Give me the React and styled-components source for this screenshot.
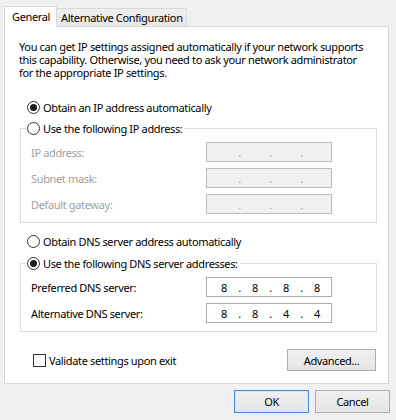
import React from "react";
import styled, { createGlobalStyle } from "styled-components";

const FONT = `"Noto Sans", "Open Sans", sans-serif`;

const Global = createGlobalStyle`
  html, body { margin: 0; padding: 0; background: #f0f0f0; }
  body { font-family: ${FONT}; font-size: 11px; letter-spacing: -0.35px; color: #000; }
  * { box-sizing: border-box; }
`;

const Window = styled.div`
  width: 396px;
  height: 420px;
  background: #f0f0f0;
  padding: 6px 0 0 4px;
  display: flex;
  flex-direction: column;
  overflow: hidden;
`;

const TabStrip = styled.div`
  display: flex;
  align-items: flex-end;
  height: 20px;
`;

const Tab = styled.div`
  position: relative;
  z-index: 1;
  height: ${(p) => (p.$active ? "21px" : "18px")};
  margin-bottom: ${(p) => (p.$active ? "-1px" : "0")};
  width: ${(p) => p.$width}px;
  padding: ${(p) => (p.$active ? "2px 0 0 7px" : "1px 0 0 4px")};
  background: ${(p) => (p.$active ? "#fff" : "linear-gradient(#f0f0f0, #e8e8e8)")};
  border: 1px solid #d9d9d9;
  border-bottom: none;
  border-left: ${(p) => (p.$active ? "1px solid #d9d9d9" : "none")};
  line-height: 15px;
  white-space: nowrap;
`;

const Panel = styled.div`
  width: 385px;
  background: #fff;
  border: 1px solid #d9d9d9;
  padding: 13px 11px 12px 15px;
  display: flex;
  flex-direction: column;
`;

const Description = styled.p`
  margin: 0 0 0 -1px;
  line-height: 13px;
  white-space: nowrap;
`;

const RadioRow = styled.label`
  display: flex;
  align-items: center;
  gap: 3px;
  height: 16px;
  margin-top: ${(p) => p.$mt || 0}px;
  padding-left: ${(p) => (p.$legend ? 0 : 7)}px;
  white-space: nowrap;
`;

const RadioCircle = styled.span`
  width: 13px;
  height: 13px;
  border-radius: 50%;
  border: 1px solid #333;
  background: #fff;
  display: flex;
  align-items: center;
  justify-content: center;
  flex: none;
  &::after {
    content: "";
    width: 7px;
    height: 7px;
    border-radius: 50%;
    background: ${(p) => (p.$checked ? "#1c1c1c" : "transparent")};
  }
`;

const Group = styled.fieldset`
  margin: ${(p) => p.$mt}px 0 0 0;
  padding: 6px 0 8px 10px;
  border: 1px solid #dcdcdc;
  min-width: 0;
`;

const Legend = styled.legend`
  padding: 0 2px 0 0;
  margin-left: -4px;
`;

const FieldGrid = styled.div`
  display: grid;
  grid-template-columns: 175px 126px;
  row-gap: 6px;
  align-items: center;
`;

const FieldLabel = styled.span`
  color: ${(p) => (p.$disabled ? "#a0a0a0" : "#000")};
  white-space: nowrap;
`;

const IpBox = styled.div`
  width: 126px;
  height: 20px;
  border: 1px solid ${(p) => (p.$disabled ? "#bcbcbc" : "#abadb3")};
  background: ${(p) => (p.$disabled ? "#f0f0f0" : "#fff")};
  display: flex;
  align-items: center;
  padding-left: 5px;
  color: ${(p) => (p.$disabled ? "#a0a0a0" : "#000")};
`;

const Octet = styled.span`
  width: 24px;
  text-align: center;
`;

const Dot = styled.span`
  width: 7px;
  text-align: center;
`;

const BottomRow = styled.div`
  display: flex;
  align-items: center;
  justify-content: space-between;
  margin-top: 17px;
  padding-left: 13px;
  padding-right: 1px;
`;

const CheckRow = styled.label`
  display: flex;
  align-items: center;
  gap: 3px;
`;

const CheckBox = styled.span`
  width: 13px;
  height: 13px;
  border: 1px solid #333;
  background: #fff;
`;

const Button = styled.button`
  font-family: ${FONT};
  font-size: 11px;
  letter-spacing: -0.35px;
  color: #000;
  width: ${(p) => p.$width}px;
  height: ${(p) => p.$height}px;
  padding: 0;
  border: 1px solid ${(p) => (p.$default ? "#3c8fd8" : "#acacac")};
  background: linear-gradient(#f0f0f0, #e5e5e5);
  box-shadow: ${(p) => (p.$default ? "inset 0 0 0 1px #d4e7f8" : "none")};
  border-radius: 0;
`;

const Footer = styled.div`
  display: flex;
  justify-content: flex-end;
  gap: 6px;
  padding: 6px 6px 0 0;
`;

function Ip({ value, disabled }) {
  const parts = value ? value.split(".") : ["", "", "", ""];
  const out = [];
  parts.forEach((p, i) => {
    out.push(<Octet key={"o" + i}>{p}</Octet>);
    if (i < 3) out.push(<Dot key={"d" + i}>.</Dot>);
  });
  return <IpBox $disabled={disabled}>{out}</IpBox>;
}

export default function App() {
  return (
    <>
      <Global />
      <Window>
        <TabStrip>
          <Tab $active $width={53}>General</Tab>
          <Tab $width={130}>Alternative Configuration</Tab>
        </TabStrip>
        <Panel>
          <Description>
            You can get IP settings assigned automatically if your network supports
            <br />
            this capability. Otherwise, you need to ask your network administrator
            <br />
            for the appropriate IP settings.
          </Description>

          <RadioRow $mt={20}>
            <RadioCircle $checked />
            Obtain an IP address automatically
          </RadioRow>

          <Group $mt={5}>
            <Legend>
              <RadioRow $legend>
                <RadioCircle />
                Use the following IP address:
              </RadioRow>
            </Legend>
            <FieldGrid>
              <FieldLabel $disabled>IP address:</FieldLabel>
              <Ip disabled />
              <FieldLabel $disabled>Subnet mask:</FieldLabel>
              <Ip disabled />
              <FieldLabel $disabled>Default gateway:</FieldLabel>
              <Ip disabled />
            </FieldGrid>
          </Group>

          <RadioRow $mt={10}>
            <RadioCircle />
            Obtain DNS server address automatically
          </RadioRow>

          <Group $mt={6}>
            <Legend>
              <RadioRow $legend>
                <RadioCircle $checked />
                Use the following DNS server addresses:
              </RadioRow>
            </Legend>
            <FieldGrid>
              <FieldLabel>Preferred DNS server:</FieldLabel>
              <Ip value="8.8.8.8" />
              <FieldLabel>Alternative DNS server:</FieldLabel>
              <Ip value="8.8.4.4" />
            </FieldGrid>
          </Group>

          <BottomRow>
            <CheckRow>
              <CheckBox />
              Validate settings upon exit
            </CheckRow>
            <Button $width={89} $height={22}>Advanced...</Button>
          </BottomRow>
        </Panel>
        <Footer>
          <Button $default $width={75} $height={23}>OK</Button>
          <Button $width={75} $height={23}>Cancel</Button>
        </Footer>
      </Window>
    </>
  );
}
